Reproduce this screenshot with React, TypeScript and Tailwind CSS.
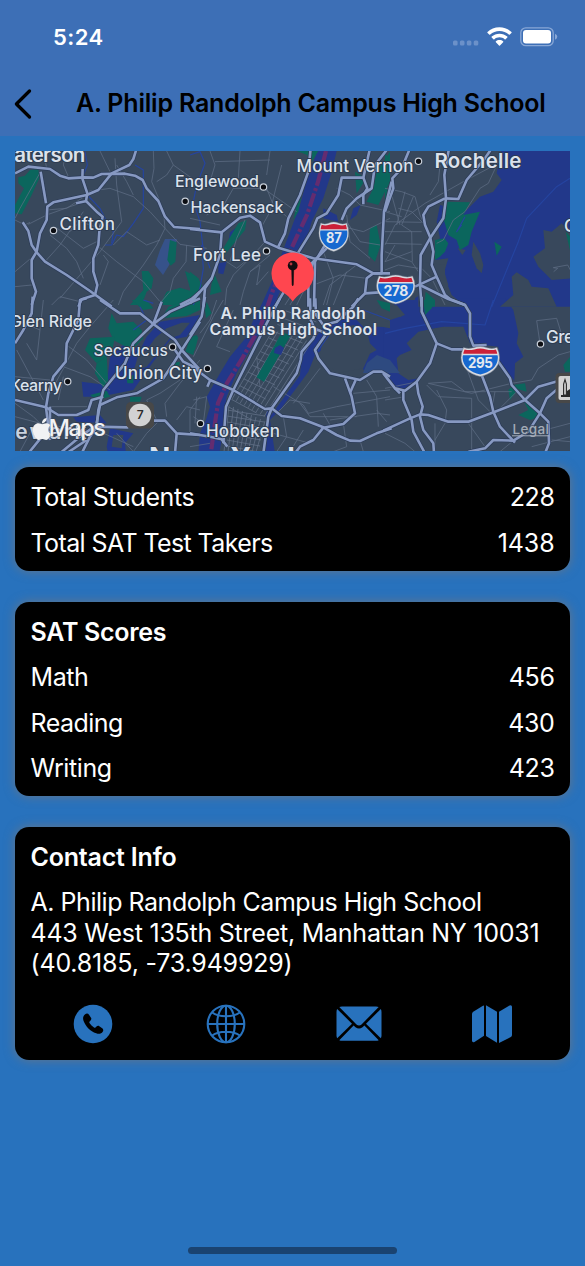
import { FaApple } from "react-icons/fa";

type Tile = {
  x: number;
  y: number;
  water: string[];
  land: string[];
  park: string[];
  stream: string[];
  minor: string[];
  major: string[];
};

// Each tile covers 200x160 points and is stored at three units per point.
const tiles: Tile[] = [
  {
    x: 0,
    y: 145,
    water: [],
    land: [],
    park: [
      "55,97 75,92 90,75 115,72 118,100 95,150 65,208 45,205 45,180 72,130 55,115",
      "510,285 530,292 526,350 512,362 502,345",
      "425,378 445,378 460,400 455,430 440,440 425,480 390,480 430,435",
      "555,378 590,395 600,420 570,430",
      "500,440 540,428 580,440 565,480 480,480",
    ],
    stream: [
      "405,60 430,75 430,190 400,235 370,275 350,270 335,300 315,300",
      "255,20 262,60 250,90",
      "262,150 300,190 320,230 340,260 335,295",
    ],
    minor: [
      "85,238 140,210 230,178",
      "460,18 462,70 455,110 480,170 492,215 495,250 470,300 430,360 370,440 355,480",
      "620,310 540,298 495,250",
      "260,140 330,130 400,155 450,200 495,250",
      "122,80 60,190 45,220",
      "45,225 75,240 90,232",
      "135,350 180,300 250,200",
      "345,40 350,120 365,230 300,320 180,460",
      "290,300 350,350 430,410 480,470",
      "172,250 250,310 290,290",
      "210,260 240,230 300,250",
      "150,270 200,310 230,350 250,400",
      "340,300 380,260 440,300 480,285",
      "310,330 325,350 300,420",
      "45,380 110,325",
      "45,425 95,420",
      "155,480 180,455 240,470",
      "350,60 380,110 400,150",
      "560,300 558,350 520,400 510,440 475,480",
      "500,18 520,60 590,110 600,135",
      "470,110 500,90 520,60",
      "130,18 140,70",
      "200,18 190,60 205,95",
      "300,18 330,80",
      "140,195 200,190 260,150",
    ],
    major: [
      "45,85 85,65 150,72 180,92 205,100 250,97 280,98 305,87 375,86 405,92 428,105 440,130 475,168 495,215 522,246 600,252",
      "410,10 400,42 388,60 335,85 295,135 260,150 160,172 142,185 140,225 120,265 110,320 95,345 95,400 108,440 95,480",
      "122,80 138,175",
      "248,72 247,100 262,145 258,168 290,200 308,215 298,260 295,300 280,340 280,380 292,420 285,450 245,463 235,485",
      "228,175 260,168",
      "68,232 85,258 95,300 110,322 135,350 200,390 270,438 335,485",
      "540,480 575,462 600,440",
    ],
  },
  {
    x: 190,
    y: 145,
    water: [
      "385,10 442,10 425,80 400,160 365,230 345,300 270,440 250,485 212,485 250,400 270,340 300,260 330,180 355,90",
      "120,262 150,240 150,265 130,290 112,312",
      "85,355 110,350 100,388 85,385",
      "490,190 512,180 500,210 480,225",
      "400,190 440,210 445,230 400,220",
    ],
    land: [],
    park: [
      "495,80 520,95 522,110 500,145",
      "560,80 600,20 600,110 565,180 530,170 550,130",
      "540,250 560,240 572,300 555,350 535,330",
      "145,235 170,225 165,255 120,310 105,330 100,310",
      "0,380 25,400 40,430 10,470 0,460",
      "75,390 95,440 60,450 65,415",
      "335,150 325,200 310,225 320,180",
      "320,18 385,18 360,60 352,30",
    ],
    stream: [
      "0,30 30,20 45,55 20,120 10,170 30,230 38,300 50,340 60,370",
      "35,300 40,370 30,430 10,480",
    ],
    minor: [
      "60,18 75,60 60,110",
      "150,18 145,100 130,130",
      "75,50 240,45",
      "240,18 230,90",
      "220,130 320,200",
      "275,60 240,200 215,245",
      "0,220 90,240",
      "50,210 100,180 180,210",
      "210,130 130,130 90,200",
      "290,215 250,180 230,130",
      "95,340 140,370 190,330 225,290",
      "105,480 110,430 130,390 190,330",
      "150,480 160,440 180,380 240,330",
      "180,380 210,360 200,420 235,380",
      "440,130 480,150 510,180 600,200",
      "470,230 510,290 570,300",
      "440,240 520,260 600,220",
      "410,260 400,320 430,400 410,480",
      "470,210 480,290",
      "370,420 450,390 530,400",
      "300,480 350,390",
      "285,480 340,395",
      "320,480 360,400",
      "400,480 420,420 500,360",
      "430,480 470,380",
      "480,290 540,340",
      "165,225 140,280 120,350",
    ],
    major: [
      "362,10 355,80 330,150 295,220 285,265 265,305",
      "0,252 95,262 150,218 180,212 210,232 225,290 265,308 370,340 500,358 550,385 600,385",
      "95,262 90,330 65,400 0,475",
      "65,400 45,430 40,485",
      "325,322 370,250 382,220 410,205 445,150 455,98 520,98 540,10",
      "590,15 555,60 545,130 500,160 470,190 455,225",
      "430,290 395,325 370,350 355,400 355,485",
      "405,300 375,350 372,485",
      "520,98 532,130 520,150 520,178",
      "605,110 582,200 575,330 575,385 550,385 530,400 525,445 485,485",
      "525,445 600,440",
      "255,485 300,410 370,350",
    ],
  },
  {
    x: 385,
    y: 145,
    water: [
      "350,10 560,10 560,485 90,485 90,460 120,440 185,440 190,420 178,380 190,340 150,345 150,290 165,280 155,230 165,180 240,200 285,155 325,140 350,105 335,85",
    ],
    land: [
      "265,290 285,325 295,360 290,385 275,370 260,330",
      "218,310 242,315 232,330",
      "445,335 480,310 475,255 500,260 530,235 560,270 560,400 500,405 480,385 460,365",
      "380,395 395,382 430,405 440,425 490,430 515,485 345,485 385,450",
      "100,350 180,360 180,400 200,450 240,485 100,485",
    ],
    park: [
      "185,170 255,172 235,210 285,200 260,260 250,300 225,315 215,285 190,270 175,220",
      "150,285 178,280 190,295 180,320 165,335 150,345",
      "328,290 350,305 335,332",
      "542,260 556,275 556,320",
      "122,440 150,465 150,485 118,485",
      "0,120 12,140 0,170",
      "0,25 12,40 0,60",
    ],
    stream: ["240,215 215,260 230,240", "555,100 515,125 425,220 400,290 320,485"],
    minor: [
      "0,300 30,240 120,175 235,110 330,60",
      "155,295 175,285 205,225 240,200 285,130 310,115 340,50",
      "0,130 50,140 90,155 105,210 130,260",
      "0,230 110,232",
      "0,260 110,260",
      "0,295 110,298",
      "20,150 45,240",
      "60,140 35,240",
      "85,155 50,240",
      "40,190 80,200 130,250",
      "0,320 80,350 100,380",
      "0,350 80,320",
      "50,240 80,260 82,350",
      "30,300 0,350",
      "0,375 40,360 100,370",
      "0,200 50,215",
      "165,60 160,110 135,150",
      "110,370 140,400 180,480",
      "506,380 518,370 505,368 548,360 556,375",
    ],
    major: [
      "75,10 50,70 22,100 25,130 0,200",
      "192,10 178,90 183,160 175,220 135,280 107,330 105,420 110,485",
      "180,160 220,162 245,105 300,40 320,10",
      "180,160 130,185 115,210 120,240 135,275 145,320 140,360 155,395 180,450 195,462",
      "90,425 155,395",
      "105,420 190,462 240,480",
    ],
  },
  {
    x: 0,
    y: 300,
    water: [
      "330,170 375,130 420,150 440,110 480,65 600,45 580,80 560,110 510,120 460,185 400,270 300,290 250,290 245,245 320,255",
      "220,352 300,345 320,370 230,365",
      "330,385 320,440 330,485 380,485 375,430 400,400",
    ],
    land: [
      "415,165 440,150 465,115 500,85 545,68 570,68 540,105 510,115 460,175 440,200 400,215",
      "340,405 370,405 365,445 335,440",
    ],
    park: [
      "335,40 350,70 400,65 425,90 430,115 395,150 340,120 325,85",
      "270,115 345,110 335,160 290,190 255,150",
      "290,190 320,170 325,250 310,265 285,220",
      "395,0 440,0 460,25 430,30",
      "505,20 560,0 600,0 600,30 560,48 485,55",
      "572,110 592,105 580,165 556,155",
      "390,290 425,290 420,305 390,305",
      "380,230 400,225 400,250 382,250",
      "270,285 320,272 330,290 290,300",
      "510,190 540,185 535,205",
    ],
    stream: ["420,20 440,60 400,90", "430,0 460,10"],
    minor: [
      "130,0 120,90 50,60",
      "50,150 130,300",
      "120,90 110,180 80,130",
      "340,0 270,80 230,130 140,300",
      "190,200 270,230 330,270",
      "200,135 260,180 320,250",
      "45,310 100,350 130,380",
      "150,320 270,320",
      "175,300 190,230",
      "45,350 140,375 300,395 400,440",
      "500,350 495,310 540,250 600,180",
      "470,360 440,300 480,280 540,240",
      "400,455 440,400 480,360",
      "530,360 560,320 600,330",
      "570,400 570,330 600,290",
      "350,400 400,455",
      "60,455 100,380",
      "150,240 45,230",
    ],
    major: [
      "300,0 360,40 420,40 460,72 525,120 545,150 600,210",
      "485,5 460,72 400,130 375,190 310,270 295,330 290,380 270,410 245,460",
      "600,-5 510,35 460,72",
      "600,65 545,150 520,190 490,235 410,280 350,292 300,315 290,370",
      "525,150 550,185 600,210",
      "260,-5 240,0 235,60 200,130 197,185 160,230 145,280 138,322 150,420",
      "45,300 138,322 175,345 230,345 265,330 275,300 310,290",
      "98,-10 95,40 70,90 45,130",
      "285,380 385,382",
      "462,362 495,362 530,400 600,405",
      "530,400 525,460",
      "85,460 150,380 150,320",
      "180,460 240,410 290,375",
      "200,460 260,420",
    ],
  },
  {
    x: 190,
    y: 300,
    water: [
      "225,-5 270,-5 215,90 180,150 140,220 110,290 100,380 95,420 88,460 25,460 30,400 48,360 60,320 50,290 90,220 120,170 170,110 190,60",
      "375,115 400,80 460,55 500,60 520,80 600,80 600,195 520,210 515,175 560,150 535,125 480,90 440,110 410,140 375,165 355,215 330,250 270,330 240,360 255,460 225,460 240,350 330,225 335,165",
      "100,380 240,330 245,345 110,400",
    ],
    land: [
      "400,115 440,90 490,75 530,90 545,150 520,205 440,220 390,160",
      "530,60 570,20 600,40 600,85 545,75",
      "110,300 230,330 215,460 95,460 100,380",
    ],
    park: [
      "275,98 302,105 222,245 200,232",
      "0,0 25,0 25,25 0,45",
      "50,5 65,40 48,55 45,30",
      "0,110 25,110 15,150 0,160",
      "560,0 600,10 600,35 575,25",
    ],
    stream: ["375,165 420,100 520,30", "520,30 600,60"],
    minor: [
      "100,0 70,50 10,170",
      "130,30 80,140 120,155",
      "80,0 60,60 30,100",
      "10,300 50,290 40,370 10,350",
      "20,290 15,370",
      "250,260 340,315 355,340 440,320 600,290",
      "330,310 360,350 500,350",
      "390,205 310,310",
      "360,310 300,300 260,340",
      "490,280 600,270",
      "420,360 560,340 600,345",
      "530,240 560,290 565,380",
      "460,370 470,440 430,455",
      "510,420 520,455",
      "340,390 300,455",
      "280,350 290,410 260,455",
      "560,330 590,365",
      "400,340 420,375",
      "200,170 210,260",
      "0,440 60,430",
      "250,400 360,430",
    ],
    major: [
      "270,-5 230,70 175,180 130,270 108,320 105,360 100,430",
      "0,195 60,240 130,270 225,327 245,325 275,348 330,355 400,382 440,405 480,422 510,423 560,400 605,385",
      "245,325 320,220 332,180 335,155 370,115 378,95 362,60 360,-5",
      "376,-5 378,45 400,75 440,65 490,20 505,-5",
      "370,85 410,100 375,150 385,175 420,220 510,240 550,215 575,215 600,230",
      "465,235 485,290 495,340 460,372 400,383 370,420 330,440 315,460",
      "497,240 480,278",
      "245,325 235,350 220,460",
      "0,400 60,410 95,418 112,440",
      "62,238 52,260",
      "45,-10 35,50 0,105",
    ],
  },
  {
    x: 385,
    y: 300,
    water: [
      "20,0 105,0 130,55 150,85 100,95 65,130 80,150 45,165 35,175 40,220 70,240 100,235 60,270 30,260 -5,215 -5,50 50,50",
      "110,-5 360,-5 385,30 400,100 395,130 415,170 390,190 388,242 345,190 340,140 255,130 235,80 175,80 150,85 120,50",
    ],
    land: ["0,25 35,15 60,45 0,65", "150,85 235,80 250,140 200,150 160,120"],
    park: [
      "115,0 150,0 140,25 120,45",
      "370,270 385,255 420,250 425,275 400,268 375,300",
      "400,345 430,330 415,300 450,330 465,350 435,360",
      "535,195 556,170 556,215 540,215",
    ],
    stream: ["0,100 60,85 170,65 300,75 325,0"],
    minor: [
      "455,62 515,55 535,120 555,120",
      "455,62 465,130",
      "555,155 520,165 460,205 440,240 380,250 260,280 130,250",
      "130,250 200,245 240,275 380,275",
      "125,255 160,290 260,295 260,450",
      "0,265 100,245",
      "155,270 185,330 180,370 150,420",
      "245,205 280,300 320,340",
      "0,300 60,290",
      "0,400 60,430 90,455",
      "480,390 555,370",
      "440,440 555,410",
      "500,420 555,425",
      "250,370 300,440",
      "150,370 150,455",
      "345,455 400,410",
      "330,275 320,330",
      "400,270 340,330",
    ],
    major: [
      "110,-10 110,35 155,130 135,190 95,245 60,272 30,265 -5,220",
      "155,130 200,148 235,148",
      "190,-5 240,15 255,40 255,110 265,137 305,135",
      "55,270 55,300 80,360 85,395 120,460",
      "95,245 100,280 113,320 105,350 115,390 145,430 147,460",
      "-5,392 75,355 105,343 130,345 190,365 250,365 330,335 420,300 460,260 520,243",
      "290,225 315,290 325,335 345,380 390,428",
      "340,185 375,235 380,255 420,300 465,340 490,365 492,430 480,460",
      "250,455 300,445 325,420 385,422 430,395 465,340 485,295 520,265",
      "45,280 30,265",
    ],
  },
];

type Layer = "water" | "land" | "park" | "stream" | "minor" | "major";

function Shapes({ layer, color }: { layer: Layer; color: string }) {
  return (
    <>
      {tiles.map((t, i) => (
        <g key={i} transform={`translate(${t.x} ${t.y}) scale(0.33333)`} fill={color}>
          {t[layer].map((p, j) => (
            <polygon key={j} points={p} />
          ))}
        </g>
      ))}
    </>
  );
}

function Lines({ layer, color, width }: { layer: Layer; color: string; width: number }) {
  return (
    <>
      {tiles.map((t, i) => (
        <g
          key={i}
          transform={`translate(${t.x} ${t.y}) scale(0.33333)`}
          fill="none"
          stroke={color}
          strokeWidth={width}
          strokeLinejoin="round"
        >
          {t[layer].map((p, j) => (
            <polyline key={j} points={p} />
          ))}
        </g>
      ))}
    </>
  );
}

const towns: { name: string; x: number; y: number; w: number; size: number; weight: number; dot?: [number, number] }[] = [
  { name: "Paterson", x: 2, y: 161.5, w: 83, size: 20.5, weight: 600 },
  { name: "Clifton", x: 59.5, y: 229.5, w: 55, size: 17, weight: 500, dot: [53.5, 230.5] },
  { name: "Englewood", x: 175, y: 187, w: 83.5, size: 16, weight: 500, dot: [263.5, 187] },
  { name: "Hackensack", x: 190.5, y: 212.7, w: 92.5, size: 16, weight: 500, dot: [185.2, 201.3] },
  { name: "Fort Lee", x: 193, y: 261, w: 67.5, size: 17, weight: 500, dot: [266.5, 251] },
  { name: "Mount Vernon", x: 296.5, y: 171.7, w: 116.5, size: 17, weight: 500, dot: [418.5, 161.3] },
  { name: "Rochelle", x: 434.5, y: 167.7, w: 86.5, size: 20.5, weight: 600 },
  { name: "Glen Ridge", x: 10, y: 327, w: 81.5, size: 16, weight: 500 },
  { name: "Secaucus", x: 93.5, y: 355.7, w: 74, size: 15.5, weight: 500, dot: [172.6, 347] },
  { name: "Union City", x: 115, y: 378.7, w: 87, size: 17, weight: 500, dot: [207.5, 368.5] },
  { name: "Kearny", x: 10, y: 391, w: 51.5, size: 16, weight: 500, dot: [67.7, 381.6] },
  { name: "Hoboken", x: 206, y: 436.7, w: 73.5, size: 17, weight: 500, dot: [200.5, 423.5] },
  { name: "New York", x: 149, y: 467.5, w: 154, size: 28, weight: 700 },
  { name: "Great", x: 546, y: 343, w: 42, size: 17, weight: 500, dot: [540.5, 344] },
  { name: "Glen", x: 564, y: 232, w: 36, size: 17, weight: 500 },
];

function Shield({ x, y, w, h, label }: { x: number; y: number; w: number; h: number; label: string }) {
  return (
    <svg x={x} y={y} width={w} height={h} viewBox="0 0 40 32" preserveAspectRatio="none" overflow="visible">
      <path d="M3 1.5Q8 3.5 13 1.8Q17 .5 20 .5Q23 .5 27 1.8Q32 3.5 37 1.5Q39.5 7 39.5 12C39.5 22 31 29 20 31.5C9 29 .5 22 .5 12Q.5 7 3 1.5Z" fill="#d9dce2" stroke="#707c8e" strokeWidth=".5" />
      <path d="M2.5 9.5H37.5Q38 11 37.8 13C37.5 21 30 27.5 20 29.5C10 27.5 2.5 21 2.2 13Q2 11 2.5 9.5Z" fill="#1668d0" />
      <path d="M4.2 3.5Q9 5 14 3.5Q20 1.5 26 3.5Q31 5 35.8 3.5Q36.8 5.5 37.2 8H2.8Q3.2 5.500 4.2 3.5Z" fill="#cb2138" />
      <text
        x="20"
        y="23"
        textAnchor="middle"
        textLength={label.length === 3 ? 25 : 20}
        lengthAdjust="spacingAndGlyphs"
        fontSize="15.5"
        fontWeight="700"
        fill="#e4e8ef"
      >
        {label}
      </text>
    </svg>
  );
}

const streets = Array.from({ length: 15 }, (_, i) => i);
const avenues = Array.from({ length: 9 }, (_, i) => i);

function SchoolMap() {
  return (
    <svg
      viewBox="15 151 555 300"
      className="block h-[300px] w-full bg-[#38485c] font-['Inter','Liberation_Sans',sans-serif]"
    >
      <Shapes layer="water" color="#22388a" />
      <Shapes layer="land" color="#38485c" />
      <polygon points="165,239 177,239 171,262 163,275 155,265 160,250" fill="#36528a" />
      <polygon points="367,363 377,355 390,360 400,373 363,373" fill="#2e4a80" />
      <Shapes layer="park" color="#0b665d" />
      <Lines layer="stream" color="#2544a0" width={3.5} />
      <Lines layer="minor" color="#5f6e85" width={2.2} />
      <g stroke="#67768d" strokeWidth=".7">
        {streets.map((i) => (
          <line key={i} x1={227 + i * 4.2} y1={406 - i * 6.8} x2={252 + i * 4.6} y2={420 - i * 7} />
        ))}
        {avenues.map((i) => (
          <line key={i} x1={232 + i * 4} y1={399 + i * 2.2} x2={273 + i * 4.8} y2={330 + i * 1.5} />
        ))}
        {avenues.map((i) => (
          <line key={i} x1={229 + i * 4.5} y1={405 + i * 2} x2={224 + i * 4} y2={452} />
        ))}
        {avenues.slice(0, 7).map((i) => (
          <line key={i} x1={227} y1={410 + i * 6} x2={265 - i} y2={416 + i * 6} />
        ))}
      </g>
      <polygon points="281.7,332.7 290.7,335 264,381.7 256.7,377.3" fill="#07655d" />
      <polygon points="275,348 280,345 284,348 281,355 274,353" fill="#22388a" />
      <polyline
        points="326,151 318,182 307,215 293,245 273,290 261,325 243,357 227,383 218,403 215,423 211,452"
        fill="none"
        stroke="#642c70"
        strokeWidth="4.2"
        strokeDasharray="14 2.5 3 2.5"
      />
      <Lines layer="major" color="#2b3b57" width={12} />
      <Lines layer="major" color="#8799c2" width={7.8} />

      <g fill="#dbe2ec" stroke="#2c3a50" strokeWidth="1.8" paintOrder="stroke" strokeLinejoin="round">
        <text x="-3" y="439" textLength="89" fontSize="21" fontWeight="600" fill="#c9d1de">
          Newark
        </text>
        {towns.map((t) => (
          <text key={t.name} x={t.x} y={t.y} textLength={t.w} fontSize={t.size} fontWeight={t.weight}>
            {t.name}
          </text>
        ))}
      </g>
      {towns.map((t) =>
        t.dot ? (
          <circle key={t.name} cx={t.dot[0]} cy={t.dot[1]} r="3.2" fill="#0b0d12" stroke="#c9d0da" strokeWidth="1.2" />
        ) : null,
      )}

      <Shield x={318.5} y={221.5} w={30.5} h={30.5} label="87" />
      <Shield x={376} y={274.5} w={39.5} h={30} label="278" />
      <Shield x={460.5} y={346} w={39.5} h={31} label="295" />

      <rect x="126" y="402" width="28" height="26.5" rx="5" fill="#484848" />
      <circle cx="140" cy="415" r="11.3" fill="#d2d2d2" />
      <text x="140" y="419.2" textAnchor="middle" fontSize="12" fontWeight="600" fill="#2a2a2a">
        7
      </text>

      <rect x="555.5" y="373" width="24" height="30" rx="4" fill="#484848" />
      <rect x="558.5" y="376" width="20" height="24" rx="2" fill="#d2d2d2" />
      <path
        d="M563.6 395V384L565 379.5L566.4 384V395Z"
        fill="none"
        stroke="#2a2a2a"
        strokeWidth="1.1"
      />
      <path d="M561 395H572V397H561ZM567 391L570 389V395H567Z" fill="#2a2a2a" />

      <path
        d="M292.7 252.5A21.2 21.2 0 0 1 301 293.2Q297 295.5 292.7 301.5Q288.4 295.5 284.4 293.2A21.2 21.2 0 0 1 292.7 252.5Z"
        fill="#ff464f"
      />
      <path d="M291.7 268H293.7L293.3 284.5L292.7 286L292.1 284.5Z" fill="#120d10" stroke="#120d10" strokeWidth=".6" />
      <circle cx="292.7" cy="265.6" r="4.9" fill="#120d10" />
      <circle cx="291" cy="264" r="1.4" fill="#b23840" />

      <g fill="#dde3ec" stroke="#33415a" strokeWidth="1.6" paintOrder="stroke" fontSize="16" fontWeight="600">
        <text x="220.5" y="318.5" textLength="145">
          A. Philip Randolph
        </text>
        <text x="209.5" y="334.8" textLength="167">
          Campus High School
        </text>
      </g>

      <FaApple x={29.5} y={416.5} width={18} height={20} color="#f1f2f4" />
      <text
        x="48.5"
        y="435.7"
        textLength="57"
        fontSize="23.5"
        fontWeight="500"
        fill="#f1f2f4"
        stroke="#3a4558"
        strokeWidth=".6"
        paintOrder="stroke"
      >
        Maps
      </text>
      <text x="512.5" y="433.8" textLength="36" fontSize="13.5" fontWeight="500" fill="#a3acb8" stroke="#3a485c" strokeWidth="1.4" paintOrder="stroke">
        Legal
      </text>
      <path d="M512 435.8H549" stroke="#a3acb8" strokeWidth="1" />
    </svg>
  );
}

function StatusBar() {
  return (
    <div className="flex h-[72px] items-center justify-between pr-[27px] pl-[53px] pt-[2px]">
      <span className="text-[22px] font-semibold tracking-[0.4px] text-white">5:24</span>
      <div className="flex items-center">
        <svg width="28" height="6" viewBox="0 0 28 6" className="mt-[12px] fill-[#6c91c9]">
          <rect x="1" y=".5" width="4.6" height="5" rx="1.5" />
          <rect x="7.9" y=".5" width="4.6" height="5" rx="1.5" />
          <rect x="14.8" y=".5" width="4.6" height="5" rx="1.5" />
          <rect x="21.7" y=".5" width="4.6" height="5" rx="1.5" />
        </svg>
        <svg width="25" height="20" viewBox="0 0 25 20" className="ml-[7px] fill-white">
          <path d="M12.5 .3C17.3 .3 21.5 2.1 24.5 5Q24.9 5.5 24.4 6L22.8 7.6Q22.3 8 21.8 7.6C19.3 5.4 16.1 4 12.5 4S5.7 5.4 3.2 7.6Q2.7 8 2.2 7.6L.6 6Q.1 5.5 .5 5C3.5 2.1 7.7 .3 12.5 .3Z" />
          <path d="M12.5 6.7C15.6 6.7 18.2 7.8 20.3 9.6Q20.8 10.1 20.3 10.6L18.6 12.2Q18.1 12.7 17.6 12.2C16.2 11 14.5 10.3 12.5 10.3S8.8 11 7.4 12.2Q6.9 12.7 6.4 12.2L4.7 10.6Q4.2 10.1 4.7 9.6C6.8 7.8 9.4 6.7 12.5 6.7Z" />
          <path d="M12.5 13C14 13 15.2 13.5 16.1 14.3Q16.6 14.8 16.1 15.3L13 18.5Q12.5 19 12 18.5L8.9 15.3Q8.4 14.8 8.9 14.3C9.8 13.5 11 13 12.5 13Z" />
        </svg>
        <svg width="38" height="20" viewBox="0 0 38 20" className="ml-[8px]">
          <rect x=".8" y=".8" width="32.4" height="17.9" rx="5" fill="none" stroke="#88a7d6" strokeWidth="1.3" />
          <rect x="3" y="3" width="28" height="13.6" rx="3" fill="#fff" />
          <path d="M35 6.8Q37.3 7.7 37.3 9.8T35 12.8Z" fill="#88a7d6" />
        </svg>
      </div>
    </div>
  );
}

const card = "flex flex-col rounded-[14px] bg-black px-[15.5px] shadow-[0_0_11px_0_rgba(128,118,112,0.7)]";

export default function App() {
  return (
    <div className="flex h-[1266px] w-[585px] flex-col overflow-hidden bg-[#2872bd] font-['Inter','Liberation_Sans',sans-serif]">
      <header className="h-[136px] shrink-0 bg-[#3d6fb6]">
        <StatusBar />
        <div className="flex h-[64px] items-center pl-[14px]">
          <svg width="18" height="32" viewBox="0 0 18 32" className="shrink-0" fill="none">
            <path d="M15.5 3L2.4 16L15.5 29" stroke="#000" strokeWidth="3.3" strokeLinecap="round" strokeLinejoin="round" />
          </svg>
          <h1 className="ml-[44px] text-[25px] font-semibold tracking-[-0.2px] whitespace-nowrap text-black">
            A. Philip Randolph Campus High School
          </h1>
        </div>
      </header>

      <main className="flex flex-col px-[15px] pt-[15px] text-[25px] leading-[30.5px] tracking-[-0.4px] text-white">
        <SchoolMap />

        <section className={`${card} mt-[16px] h-[104px] gap-[15px] pt-[15px]`}>
          <div className="flex justify-between">
            <span>Total Students</span>
            <span>228</span>
          </div>
          <div className="flex justify-between">
            <span className="tracking-[-0.6px]">Total SAT Test Takers</span>
            <span className="tracking-[-0.1px]">1438</span>
          </div>
        </section>

        <section className={`${card} mt-[30.5px] h-[194.5px] gap-[15px] pt-[15px]`}>
          <h2 className="font-semibold tracking-[-0.3px]">SAT Scores</h2>
          <div className="flex justify-between">
            <span>Math</span>
            <span>456</span>
          </div>
          <div className="flex justify-between">
            <span className="tracking-[-0.55px]">Reading</span>
            <span>430</span>
          </div>
          <div className="flex justify-between">
            <span>Writing</span>
            <span>423</span>
          </div>
        </section>

        <section className={`${card} mt-[30.5px] h-[233.5px] pt-[15px]`}>
          <h2 className="font-semibold tracking-[-0.2px]">Contact Info</h2>
          <div className="mt-[15px] whitespace-nowrap">
            <p className="tracking-[-0.47px]">A. Philip Randolph Campus High School</p>
            <p className="tracking-[-0.24px]">443 West 135th Street, Manhattan NY 10031</p>
            <p className="tracking-[-0.19px]">(40.8185, -73.949929)</p>
          </div>
          <div className="mt-[25px] grid grid-cols-[124px_142px_124px_142px] items-center text-[#2872bd]">
            <svg width="40" height="40" viewBox="0 0 40 40" className="justify-self-center">
              <circle cx="20" cy="20" r="19.3" fill="currentColor" />
              <path
                d="M12.2 10.2C13.6 9.2 15.2 9.5 16 10.7L18 13.7C18.6 14.7 18.4 15.7 17.6 16.5L16.6 17.5C16.2 18 16.2 18.5 16.5 19C17.7 20.9 19.2 22.4 21 23.6C21.6 24 22.1 23.9 22.5 23.5L23.5 22.5C24.3 21.7 25.4 21.6 26.3 22.2L29.2 24.2C30.4 25 30.6 26.6 29.7 27.8C28.3 29.8 26 30.4 23.2 29.3C17.3 27.2 12.6 22.4 10.5 16.7C9.6 13.9 10.2 11.6 12.2 10.2Z"
                fill="#000"
              />
            </svg>
            <svg width="40" height="40" viewBox="0 0 40 40" fill="none" stroke="currentColor" strokeWidth="2.1" className="justify-self-center">
              <circle cx="20" cy="20" r="18.3" />
              <ellipse cx="20" cy="20" rx="8.8" ry="18.3" />
              <path d="M20 1.7V38.3M1.7 20H38.3M6.2 8.5C9.5 11 14.5 12.3 20 12.3S30.5 11 33.8 8.5M6.2 31.5C9.5 29 14.5 27.7 20 27.7S30.5 29 33.8 31.5" />
            </svg>
            <svg width="46" height="36" viewBox="0 0 46 36" fill="currentColor" className="justify-self-center">
              <path d="M3.3 1Q4.5 .5 6 .5H40Q41.5 .5 42.7 1L25.5 18.500Q23 20.7 20.5 18.5Z" />
              <path d="M1.2 3L16 17.7L1.2 32.2Q.5 31 .5 29.5V6Q.5 4.2 1.2 3Z" />
              <path d="M44.8 3Q45.5 4.2 45.5 6V29.5Q45.5 31 44.8 32.2L30 17.7Z" />
              <path d="M3.3 34.3L17.6 19.6L19.5 21.3Q23 23.7 26.5 21.3L28.4 19.6L42.7 34.3Q41.5 34.8 40 34.8H6Q4.5 34.8 3.3 34.3Z" />
            </svg>
            <svg width="42" height="40" viewBox="0 0 42 40" fill="currentColor" className="justify-self-center">
              <path d="M13 1.5V31.8L3.5 38Q1 39 1 36.5V10Q1 8.5 2.2 7.7L12 1.8Z" />
              <path d="M15 1.2L26 7.8V38.7L15 32Z" />
              <path d="M28 7.8L38.5 1.5Q41 .7 41 3V31Q41 32.3 39.8 33L28 39Z" />
            </svg>
          </div>
        </section>
      </main>

      <div className="mt-auto mb-[12px] h-[7.5px] w-[209px] self-center rounded-full bg-[#1a4371]" />
    </div>
  );
}
